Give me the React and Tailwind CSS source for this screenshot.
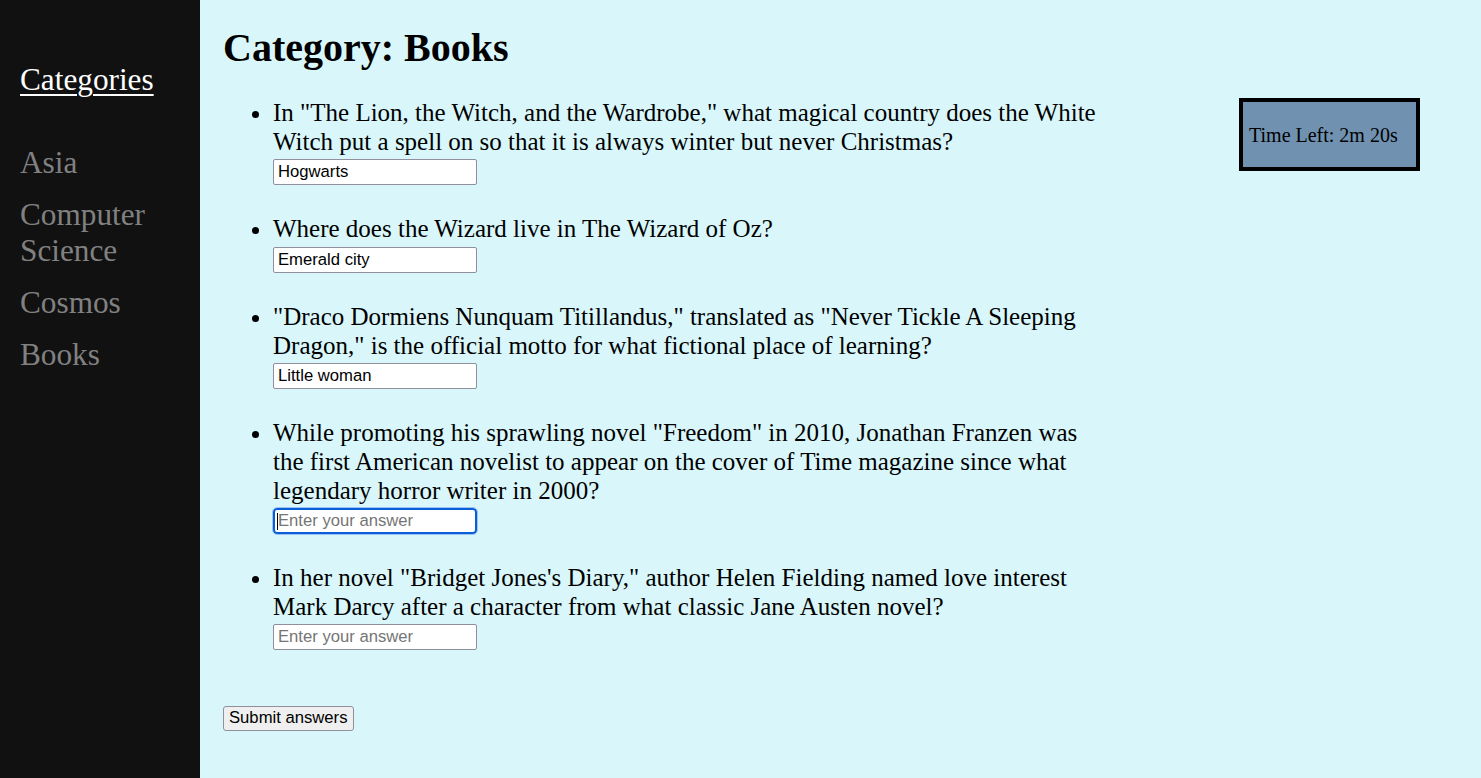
import React from 'react';

const questions = [
  {
    text: 'In "The Lion, the Witch, and the Wardrobe," what magical country does the White Witch put a spell on so that it is always winter but never Christmas?',
    value: 'Hogwarts',
  },
  { text: 'Where does the Wizard live in The Wizard of Oz?', value: 'Emerald city' },
  {
    text: '"Draco Dormiens Nunquam Titillandus," translated as "Never Tickle A Sleeping Dragon," is the official motto for what fictional place of learning?',
    value: 'Little woman',
  },
  {
    text: 'While promoting his sprawling novel "Freedom" in 2010, Jonathan Franzen was the first American novelist to appear on the cover of Time magazine since what legendary horror writer in 2000?',
    value: '',
    focused: true,
  },
  {
    text: 'In her novel "Bridget Jones\'s Diary," author Helen Fielding named love interest Mark Darcy after a character from what classic Jane Austen novel?',
    value: '',
  },
];

const categories = ['Asia', 'Computer Science', 'Cosmos', 'Books'];

const App = () => {
  return (
    <div className="flex min-h-screen font-['Liberation_Serif',serif] text-black">
      {/* Sidebar */}
      <nav className="w-[200px] shrink-0 bg-[#111111] pt-[62px] pl-[20px] pr-[12px]">
        <a href="#" className="block text-[31.25px] leading-[36px] text-white underline underline-offset-[4px] decoration-[2px]">
          Categories
        </a>
        <div className="mt-[46.5px] flex flex-col gap-[15.5px]">
          {categories.map((c) => (
            <a key={c} href="#" className="block text-[31.25px] leading-[36.5px] text-[#818181]">
              {c}
            </a>
          ))}
        </div>
      </nav>

      {/* Main */}
      <main className="flex-1 bg-[#d9f7fb] pl-[23px]">
        <h1 className="m-0 pt-[25px] text-[40px] leading-[46px] font-bold">Category: Books</h1>
        <div className="flex mt-[28px]">
          <div className="w-[885px]">
            <ul className="list-disc pl-[50px]">
              {questions.map((q, i) => (
                <li key={i} className="mb-[30.3px] text-[25px] leading-[28.75px]">
                  <span>{q.text}</span>
                  <div className="relative w-[204px] mt-[2.5px]">
                    <input
                      type="text"
                      defaultValue={q.value}
                      placeholder="Enter your answer"
                      className={
                        q.focused
                          ? "block w-[204px] h-[26px] bg-white rounded-[4px] border-2 border-[#0b5fd6] outline outline-1 outline-[#9cc3f5] px-[3px] font-['Liberation_Sans',sans-serif] text-[16.67px] leading-[20px] text-black placeholder:text-[#757575]"
                          : "block w-[204px] h-[26px] bg-white rounded-[2px] border border-[#8f8f9d] px-[4px] font-['Liberation_Sans',sans-serif] text-[16.67px] leading-[20px] text-black placeholder:text-[#757575] outline-none"
                      }
                    />
                    {q.focused && <span className="absolute left-[4px] top-[5px] w-px h-[17px] bg-black"></span>}
                  </div>
                </li>
              ))}
            </ul>
            <button className="mt-[25.5px] h-[25px] px-[5px] bg-[#efefef] border border-[#8f8f9d] rounded-[3px] font-['Liberation_Sans',sans-serif] text-[16.67px] leading-[20px] text-black">
              Submit answers
            </button>
          </div>
          <div className="ml-auto mr-[61px] -mt-[1px] w-[181px] h-[73px] border-4 border-black bg-[#7092b0] flex items-center pl-[6px] text-[20px]">
            Time Left: 2m 20s
          </div>
        </div>
      </main>
    </div>
  );
};

export default App;
